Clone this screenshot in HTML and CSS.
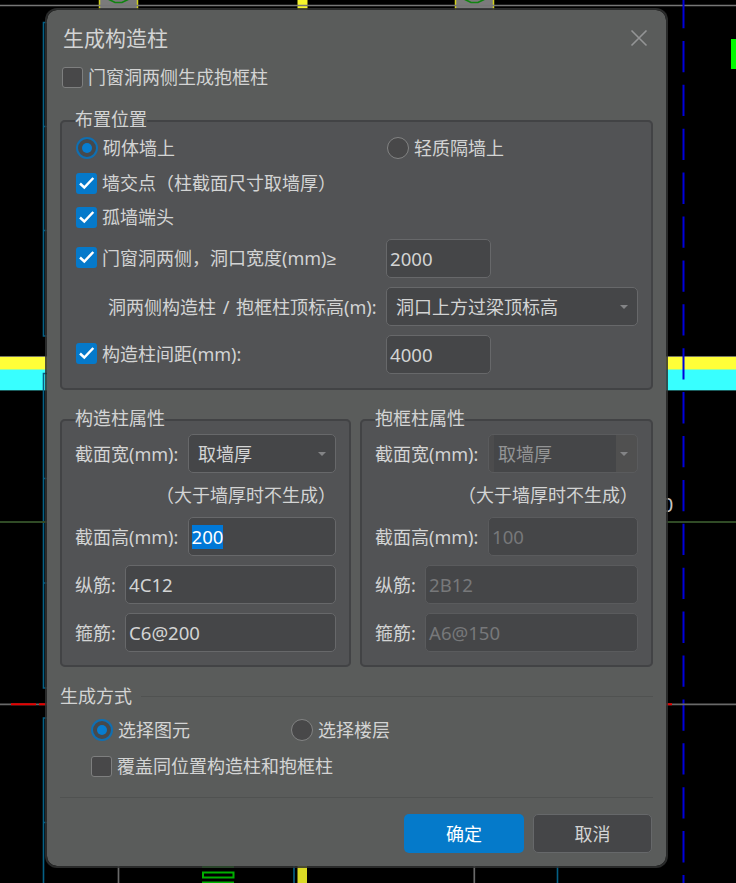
FILE: index.html
```html
<!DOCTYPE html>
<html lang="zh-CN">
<head>
<meta charset="utf-8">
<title>生成构造柱</title>
<link rel="stylesheet" href="styles.css">
</head>
<body>
<svg class="drawing" width="736" height="883" viewBox="0 0 736 883" aria-hidden="true">
  <!-- columns and walls along the top edge -->
  <path d="M99 0h39v9.500h-39zM455 0h39v9.500h-39z" fill="#7b7b7b"/>
  <path d="M99.5 0v9.500M137.5 0v9.500M455.5 0v9.500M493.5 0v9.500" stroke="#d2d21c" stroke-width="1.5" stroke-dasharray="5 1"/>
  <path d="M108 -1l7 3.500h7l7 -3.500M464 -1l7 3.500h7l7 -3.500" fill="none" stroke="#118411" stroke-width="1.700"/>
  <path d="M297.500 0h10v9.500h-10z" fill="#f6f62c"/>
  <path d="M0 5.500h736" stroke="#777" stroke-width="1.500"/>
  <path d="M731 39h5v30h-5z" fill="#00f900"/>
  <!-- wall band -->
  <path d="M0 357h736v13H0z" fill="#ffff38"/>
  <path d="M0 369.500h736V390H0z" fill="#38ffff"/>
  <path d="M0 356.500h736" stroke="#77775f"/>
  <path d="M0 390.500h736" stroke="#1b5c5c"/>
  <!-- beam outlines -->
  <path d="M48 22.500h-4.500v313.500h4.500M44 126.500h4M44 230.500h4M48 373.500h-4.500v314.500h4.500M44 478.500h4M44 583h4M48 718h-4.500v165M44 822.500h4M294 860v23M557.500 860v23" fill="none" stroke="#056085" stroke-width="1.600"/>
  <path d="M683.500 -3v886" stroke="#0000dc" stroke-width="2" stroke-dasharray="31.300 12.600"/>
  <path d="M0 522h736" stroke="#304b26" stroke-width="2"/>
  <path d="M0 704.300h736M118.500 860v23M474.300 860v23" stroke="#696969" stroke-width="1.700"/>
  <path d="M11 704.300h25M39 704.300h10M660 704.300h12" stroke="#e60000" stroke-width="2"/>
  <text class="dim" x="662" y="512">0</text>
  <!-- stair symbol and wall along the bottom edge -->
  <path d="M202 867h32M202 882.500h32M203 872.500h30.500v5H203z" fill="none" stroke="#00b000" stroke-width="2"/>
  <path d="M297.500 860h9.500v23h-9.500z" fill="#dada25"/>
</svg>

<main class="dialog">
  <header class="titlebar">
    <h1>生成构造柱</h1>
    <svg class="close" width="18" height="18" viewBox="0 0 18 18"><path d="M1.500 1.500l15 15M16.500 1.500l-15 15"/></svg>
  </header>

  <label class="option first"><span class="box"></span>门窗洞两侧生成抱框柱</label>

  <fieldset class="placement">
    <legend>布置位置</legend>
    <div class="pair r30">
      <label class="option"><span class="radio on"></span>砌体墙上</label>
      <label class="option"><span class="radio"></span>轻质隔墙上</label>
    </div>
    <div class="pair r40"><label class="option"><span class="box on"><svg viewBox="0 0 21 21"><path d="M4 10.500L8.300 14.500 17.300 5"/></svg></span>墙交点（柱截面尺寸取墙厚）</label></div>
    <div class="pair r28"><label class="option"><span class="box on"><svg viewBox="0 0 21 21"><path d="M4 10.500L8.300 14.500 17.300 5"/></svg></span>孤墙端头</label></div>
    <div class="fields">
      <div class="pair">
        <label class="option raised"><span class="box on"><svg viewBox="0 0 21 21"><path d="M4 10.500L8.300 14.500 17.300 5"/></svg></span><span>门窗洞两侧，洞口宽度(mm)<span class="sign">≥</span></span></label>
        <div class="input short">2000</div>
      </div>
      <div class="pair">
        <span class="indent">洞两侧构造柱 / 抱框柱顶标高(m):</span>
        <div class="select">洞口上方过梁顶标高</div>
      </div>
      <div class="pair">
        <label class="option raised"><span class="box on"><svg viewBox="0 0 21 21"><path d="M4 10.500L8.300 14.500 17.300 5"/></svg></span>构造柱间距(mm):</label>
        <div class="input short">4000</div>
      </div>
    </div>
  </fieldset>

  <div class="groups">
    <fieldset class="props">
      <legend>构造柱属性</legend>
      <div class="prop wide"><span>截面宽(mm):</span><div class="select">取墙厚</div></div>
      <p class="note">（大于墙厚时不生成）</p>
      <div class="prop wide"><span>截面高(mm):</span><div class="input"><span class="selected">200</span></div></div>
      <div class="prop"><span>纵筋:</span><div class="input">4C12</div></div>
      <div class="prop"><span>箍筋:</span><div class="input">C6@200</div></div>
    </fieldset>
    <fieldset class="props">
      <legend>抱框柱属性</legend>
      <div class="prop wide"><span>截面宽(mm):</span><div class="select off">取墙厚</div></div>
      <p class="note">（大于墙厚时不生成）</p>
      <div class="prop wide"><span>截面高(mm):</span><div class="input off">100</div></div>
      <div class="prop"><span>纵筋:</span><div class="input off">2B12</div></div>
      <div class="prop"><span>箍筋:</span><div class="input off">A6@150</div></div>
    </fieldset>
  </div>

  <section class="mode">
    <h2>生成方式</h2>
    <div class="choices">
      <label class="option"><span class="radio on"></span>选择图元</label>
      <label class="option"><span class="radio"></span>选择楼层</label>
    </div>
    <label class="option cover"><span class="box"></span>覆盖同位置构造柱和抱框柱</label>
  </section>

  <footer class="actions">
    <button class="primary">确定</button>
    <button>取消</button>
  </footer>
</main>
</body>
</html>
```
FILE: styles.css
```css
* { box-sizing: border-box; }

body {
  margin: 0;
  height: 883px;
  overflow: hidden;
  padding: 8px 0 0 45px;
  background: #000;
  color: #d3d4d4;
  font: 18px/24px "Noto Sans", "Noto Sans CJK SC", sans-serif;
  white-space: nowrap;
}

.drawing { position: absolute; left: 0; top: 0; z-index: -1; }
.dim { fill: #c4c4c4; font: 20px "Liberation Sans", sans-serif; }

.dialog {
  width: 623px;
  height: 860px;
  padding: 0 13px;
  border: 2px solid rgba(48, 49, 49, .85);
  border-radius: 12px;
  background: #5a5c5b;
  background-clip: padding-box;
}

.titlebar {
  display: flex;
  align-items: center;
  justify-content: space-between;
  height: 56px;
  padding: 0 5px 0 3px;
}
h1 { margin: 0; font-size: 21px; font-weight: 400; }
.close { fill: none; stroke: #949596; stroke-width: 1.6; }

.option { display: flex; align-items: center; gap: 5px; }
.first { height: 24px; margin-top: -1px; padding-left: 2px; }

.box {
  display: flex;
  width: 21px;
  height: 21px;
  border: 1px solid #7e7f7f;
  border-radius: 3px;
  background: #484849;
}
.box.on { border: 0; background: #0579ca; }
.box svg { fill: none; stroke: #fff; stroke-width: 2.5; }

.radio {
  display: flex;
  align-items: center;
  justify-content: center;
  width: 22px;
  height: 22px;
  border: 1px solid #828383;
  border-radius: 50%;
  background: #484849;
}
.radio.on { border: 2px solid #0f6fb2; background: #46494c; }
.radio.on::after {
  content: "";
  width: 10px;
  height: 10px;
  border-radius: 50%;
  background: #067dd0;
}

fieldset {
  min-width: 0;
  margin: 0;
  padding: 0 13px;
  border: 2px solid #424345;
  border-radius: 5px;
  background: #525355;
}
legend { height: 24px; padding: 0; line-height: 21px; }

.placement { height: 281px; margin-top: 20px; }
.pair {
  display: grid;
  grid-template-columns: 311px 1fr;
  align-items: center;
}
.pair .option { padding-left: 1px; }
.pair .raised { padding-bottom: 2px; }
.r30 { height: 30px; }
.r40 { height: 40px; }
.r28 { height: 28px; }
.fields { display: grid; gap: 9px; padding-top: 8px; }
.indent { padding-left: 33px; word-spacing: 2px; }
.sign { font: 17px "Liberation Sans", sans-serif; }

.input, .select {
  display: flex;
  align-items: center;
  height: 39px;
  border: 1px solid #67686a;
  border-radius: 5px;
  background: #454648;
}
.input { padding-left: 3px; font-size: 18.6px; }
.short { width: 105px; }
.select { justify-content: space-between; padding: 0 9px; }
.pair .select { width: 252px; }
.select::after {
  content: "";
  border: 4px solid transparent;
  border-top: 4px solid #838486;
  border-bottom: 0;
}
.off { border-color: #5a5b5d; color: #77787a; }
.select.off { background: linear-gradient(90deg, #4c4c4d 5px, #454648 5px 127px, #505050 127px); color: #939495; }
.selected { margin-left: -.5px; background: #0078d7; color: #fff; }

.groups {
  display: grid;
  grid-template-columns: 291px 293px;
  gap: 9px;
  margin-top: 18px;
}
.props { height: 259px; padding-top: 2px; }
.prop {
  display: grid;
  grid-template-columns: 50px 1fr;
  align-items: center;
  margin-bottom: 9px;
}
.prop.wide { grid-template-columns: 113px 1fr; }
.note { height: 44px; margin: -9px 0 0 81px; line-height: 44px; }
.props + .props .note { margin-left: 83px; }

h2 {
  display: flex;
  align-items: center;
  gap: 9px;
  margin: 17px 0 0;
  font-size: 18px;
  font-weight: 400;
}
h2::after { content: ""; flex: 1; height: 1px; background: #505251; }
.choices {
  display: grid;
  grid-template-columns: 200px 1fr;
  height: 44px;
  padding-left: 31px;
}
.cover { height: 28px; padding-left: 31px; }

.actions {
  display: flex;
  justify-content: flex-end;
  gap: 9px;
  margin-top: 17px;
  padding: 16px 1px 0 0;
  border-top: 1px solid #505251;
}
button {
  width: 119px;
  height: 39px;
  border: 1px solid #66686a;
  border-radius: 5px;
  background: #454648;
  color: inherit;
  font: inherit;
}
.primary { width: 120px; border: 0; background: #057aca; color: #fff; }
```
